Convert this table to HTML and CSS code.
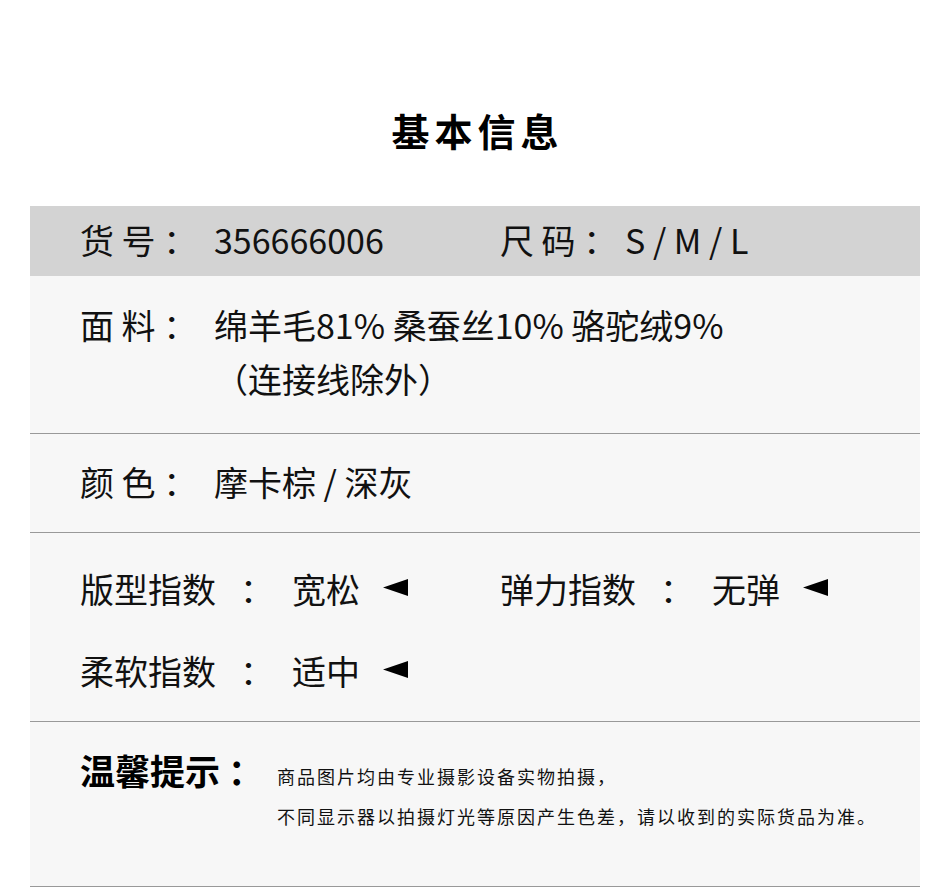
FILE: index.html
```html
<!DOCTYPE html>
<html lang="zh-CN">
<head>
<meta charset="utf-8">
<title>基本信息</title>
<link rel="stylesheet" href="styles.css">
</head>
<body>
<main class="page">
  <h1 class="title">基本信息</h1>
  <section class="spec">
    <div class="row row-head">
      <div class="pair pair-first">
        <span class="label">货 号 ：</span><span class="value">356666006</span>
      </div>
      <div class="pair">
        <span class="label label-short">尺 码 ：</span><span class="value value-size">S / M / L</span>
      </div>
    </div>
    <div class="row row-fabric">
      <span class="label">面 料 ：</span>
      <span class="value">绵羊毛81% 桑蚕丝10% 骆驼绒9%<br>（连接线除外）</span>
    </div>
    <div class="row row-color">
      <span class="label">颜 色 ：</span>
      <span class="value">摩卡棕 / 深灰</span>
    </div>
    <div class="row row-index">
      <div class="index-line">
        <div class="pair pair-first">
          <span class="idx-label">版型指数</span><span class="idx-colon">：</span><span class="idx-value">宽松</span>
          <svg class="arrow" width="25" height="17" viewBox="0 0 25 17"><polygon points="0,8.5 25,0 25,17" fill="#000"/></svg>
        </div>
        <div class="pair">
          <span class="idx-label">弹力指数</span><span class="idx-colon">：</span><span class="idx-value">无弹</span>
          <svg class="arrow" width="25" height="17" viewBox="0 0 25 17"><polygon points="0,8.5 25,0 25,17" fill="#000"/></svg>
        </div>
      </div>
      <div class="index-line">
        <div class="pair pair-first">
          <span class="idx-label">柔软指数</span><span class="idx-colon">：</span><span class="idx-value">适中</span>
          <svg class="arrow" width="25" height="17" viewBox="0 0 25 17"><polygon points="0,8.5 25,0 25,17" fill="#000"/></svg>
        </div>
      </div>
    </div>
    <div class="row row-note">
      <span class="note-label">温馨提示 ：</span>
      <p class="note-text">商品图片均由专业摄影设备实物拍摄，<br>不同显示器以拍摄灯光等原因产生色差，请以收到的实际货品为准。</p>
    </div>
  </section>
</main>
</body>
</html>
```

FILE: styles.css
```css
* { box-sizing: border-box; }

html, body {
  margin: 0;
  padding: 0;
  background: #ffffff;
}

body {
  font-family: "Noto Sans CJK SC", "Noto Sans", sans-serif;
  color: #111111;
}

.page {
  width: 950px;
  padding: 100px 30px 0;
}

.title {
  margin: 0;
  height: 106px;
  line-height: 60px;
  font-size: 38px;
  font-weight: 700;
  text-align: center;
  letter-spacing: 5px;
  padding-left: 5px;
  color: #000;
}

.spec {
  width: 890px;
  background: #f7f7f7;
}

.row {
  display: flex;
  align-items: flex-start;
  padding-left: 50px;
  font-size: 34px;
  line-height: 54px;
  border-bottom: 1px solid #999999;
}

.row-head {
  background: #d3d3d3;
  height: 70px;
  padding-top: 7px;
  border-bottom: none;
}

.pair {
  display: flex;
  align-items: center;
}

.pair-first {
  width: 420px;
}

.label {
  width: 134px;
  flex: none;
  white-space: pre;
}

.label-short {
  width: 125px;
}

.value {
  white-space: nowrap;
}

.row-fabric {
  padding-top: 22px;
  padding-bottom: 27px;
}

.row-color {
  padding-top: 21px;
  padding-bottom: 23px;
}

.row-index {
  flex-direction: column;
  padding-top: 29px;
  padding-bottom: 23px;
  gap: 28px;
}

.index-line {
  display: flex;
}

.idx-label {
  width: 160px;
  flex: none;
}

.idx-colon {
  width: 52px;
  flex: none;
}

.idx-value {
  width: 91px;
  flex: none;
}

.arrow {
  display: block;
  margin-top: -3px;
}

.row-note {
  height: 165px;
  padding-top: 21px;
}

.note-label {
  width: 197px;
  flex: none;
  font-size: 35px;
  font-weight: 700;
  color: #000;
  white-space: pre;
}

.note-text {
  margin: 13px 0 0;
  font-size: 18px;
  line-height: 40px;
  letter-spacing: 2px;
  white-space: nowrap;
}
```
